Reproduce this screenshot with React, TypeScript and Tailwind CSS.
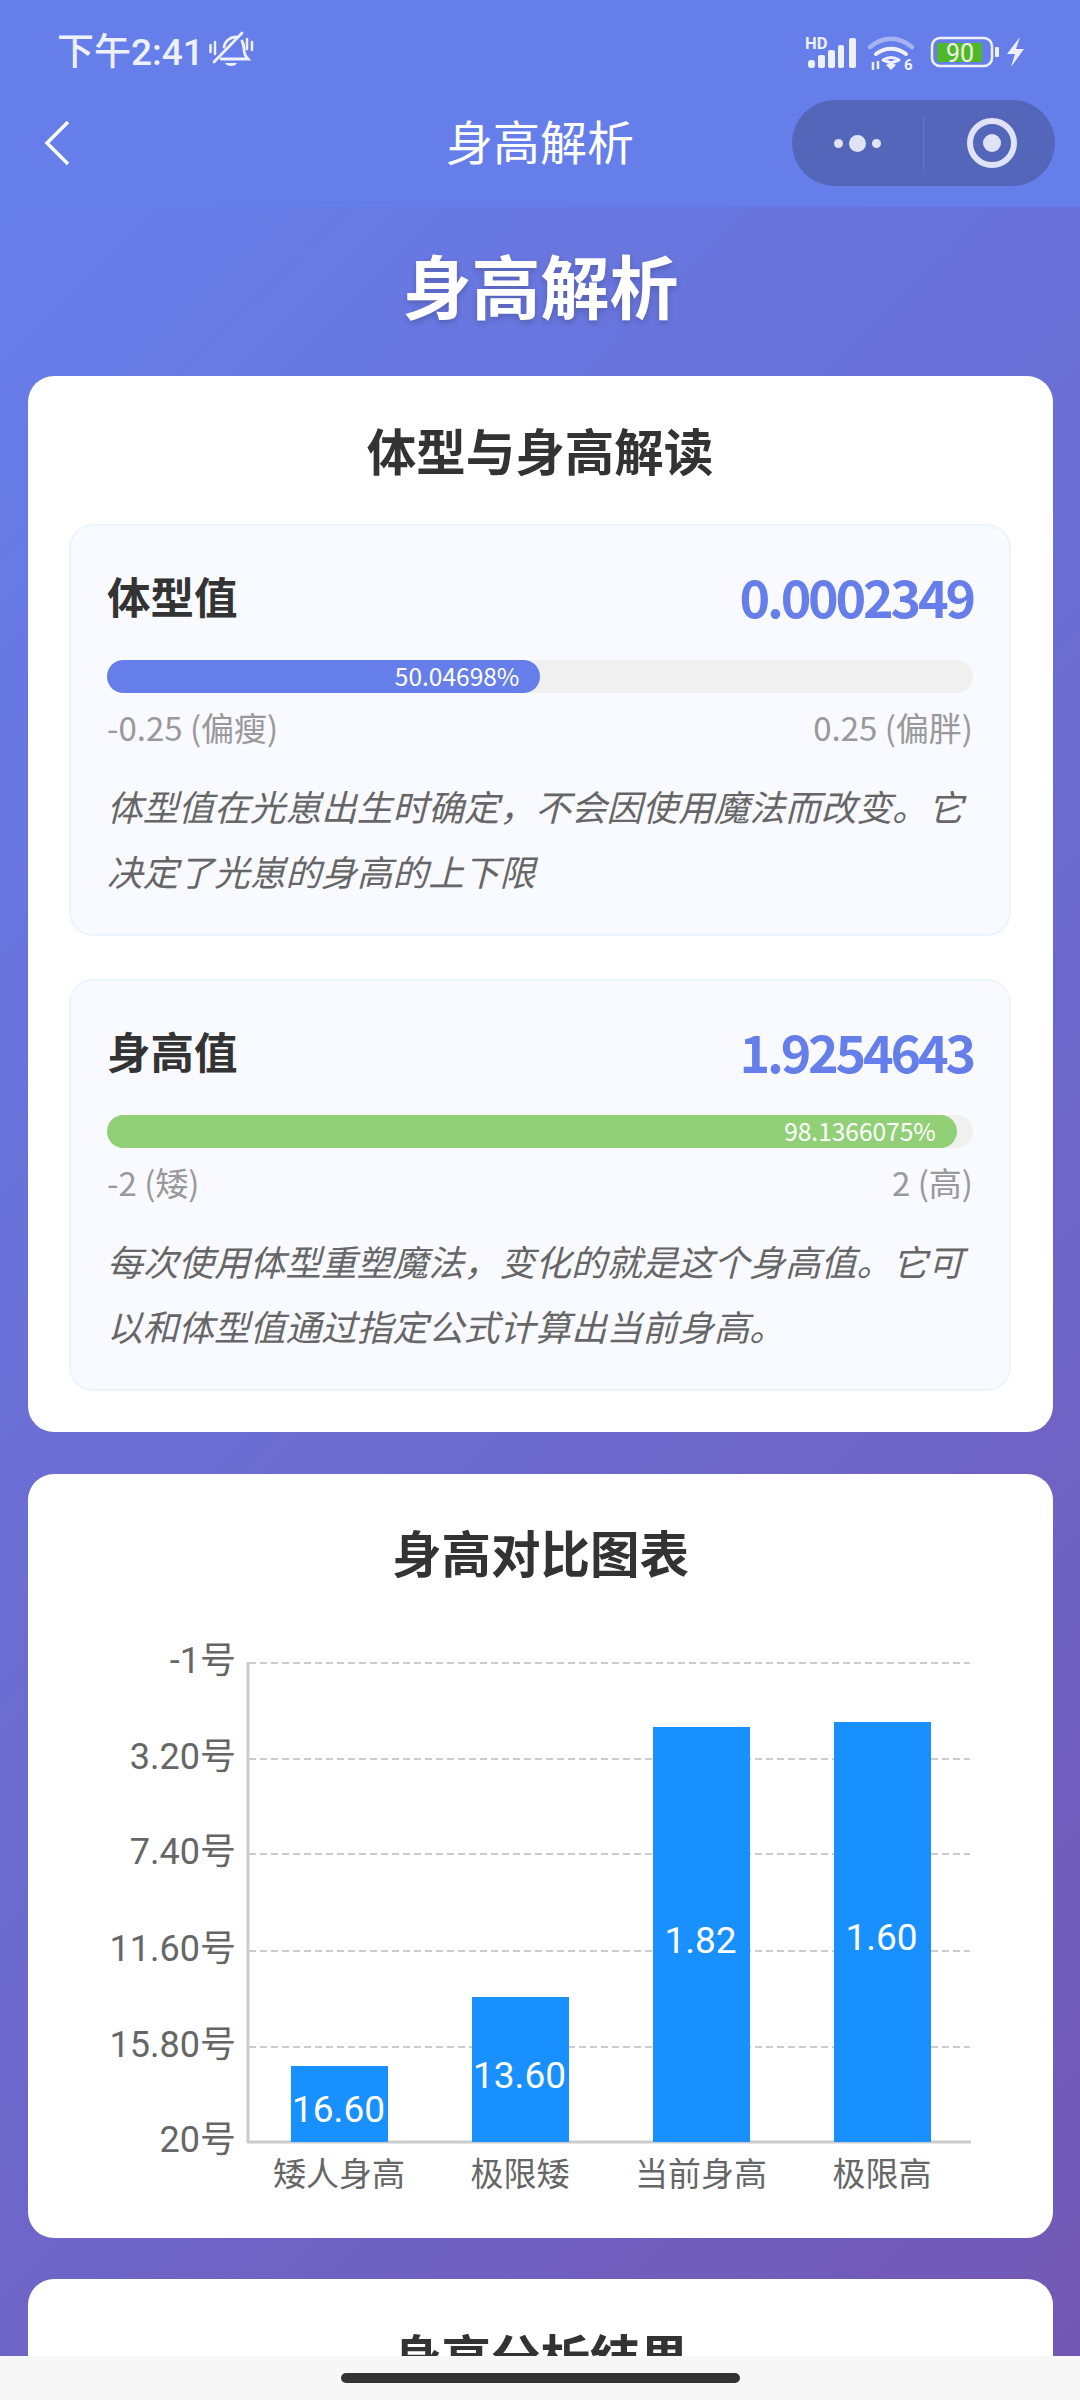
const ticks = [
  { y: 1663, label: "-1号" },
  { y: 1759, label: "3.20号" },
  { y: 1854, label: "7.40号" },
  { y: 1951, label: "11.60号" },
  { y: 2047, label: "15.80号" },
  { y: 2142, label: "20号" },
];

const bars = [
  { x: 291, top: 2066, name: "矮人身高", value: "16.60" },
  { x: 472, top: 1997, name: "极限矮", value: "13.60" },
  { x: 653, top: 1727, name: "当前身高", value: "1.82" },
  { x: 834, top: 1722, name: "极限高", value: "1.60" },
];

function StatusLeft() {
  return (
    <div className="flex items-center">
      <span className="font-['Roboto','Noto_Sans_CJK_SC',sans-serif] text-[37px] font-medium leading-[44px] text-[#eef0fb]">下午2:41</span>
      <svg width="46" height="40" viewBox="0 0 46 40" className="mb-[6px] ml-[5px]" fill="none" stroke="#eef0fb" strokeWidth="2.8" strokeLinecap="round">
        <path d="M1.5 15v7M6 12v12M38 9v10M43 12v8" strokeWidth="2.5" />
        <path d="M15 17c1-6 6-10 12-10" />
        <path d="M12 29h27c-3-3-4-6-4-10 0-3-1-6-2-8" />
        <path d="M5 32 33 3" />
        <path d="M16 33h12c-1 2-3 3-6 3s-5-1-6-3z" fill="#eef0fb" stroke="none" />
      </svg>
    </div>
  );
}

function StatusRight() {
  return (
    <svg width="222" height="36" viewBox="804 36 222 36" fill="none" className="mt-[6px]">
      <text x="806" y="49" fontSize="16.5" fontWeight="700" fill="#eef0fb" className="font-['Roboto',sans-serif]">HD</text>
      <rect x="809" y="60" width="7" height="8" rx="3" fill="#eef0fb" />
      <rect x="819" y="55" width="7" height="13" rx="2" fill="#eef0fb" />
      <rect x="829" y="50" width="7" height="18" rx="2" fill="#eef0fb" />
      <rect x="839" y="45" width="6" height="23" rx="2" fill="#eef0fb" />
      <rect x="850" y="38" width="7" height="30" rx="2" fill="#eef0fb" />
      <path d="M871 47c13-11 29-11 42 0" stroke="#a5b3f2" strokeWidth="4.5" strokeLinecap="round" />
      <path d="M877 54c9-7 21-7 30 0" stroke="#eef0fb" strokeWidth="4" strokeLinecap="round" />
      <path d="M884 60c5-3 11-3 16 0l-8 3z" stroke="#eef0fb" strokeWidth="3" strokeLinejoin="round" />
      <path d="M887 65l5 5 5-5c-3-2-7-2-10 0z" fill="#eef0fb" />
      <path d="M874 62v8M879 61v8" stroke="#eef0fb" strokeWidth="2.5" />
      <text x="905" y="70" fontSize="15" fontWeight="700" fill="#eef0fb" className="font-['Roboto',sans-serif]">6</text>
      <rect x="933" y="38" width="60" height="28" rx="8" stroke="#eef0fb" strokeWidth="2.5" />
      <rect x="938" y="43" width="45" height="19" fill="#4fb82a" />
      <text x="961" y="62" fontSize="25" textAnchor="middle" fill="#eef8e6" className="font-['Roboto',sans-serif]">90</text>
      <rect x="996" y="47" width="4" height="10" rx="1" fill="#eef0fb" />
      <path d="M1021 37l-13 17h8l-4 13 13-18h-8z" fill="#eef0fb" />
    </svg>
  );
}

function Capsule() {
  return (
    <div className="flex h-[86px] w-[263px] items-center rounded-full bg-[#5366b9]">
      <div className="flex w-[131px] items-center justify-end gap-[6px] pr-[42px]">
        <span className="h-[9px] w-[9px] rounded-full bg-[#dfe3f5]" />
        <span className="h-[17px] w-[17px] rounded-full bg-[#dfe3f5]" />
        <span className="h-[9px] w-[9px] rounded-full bg-[#dfe3f5]" />
      </div>
      <div className="h-[53px] w-px bg-[#6375c4]" />
      <div className="flex flex-1 justify-center pl-[5px]">
        <div className="flex h-[50px] w-[50px] items-center justify-center rounded-full border-[6px] border-[#dfe3f5]">
          <span className="h-[18px] w-[18px] rounded-full bg-[#dfe3f5]" />
        </div>
      </div>
    </div>
  );
}

function InfoBlock(props: {
  title: string;
  value: string;
  percent: string;
  fillClass: string;
  min: string;
  max: string;
  lines: string[];
}) {
  return (
    <div className="rounded-[24px] border-2 border-[#ebf5fd] bg-[#f8faff] px-[36px] pb-[31px] pt-[40px]">
      <div className="flex h-[60px] items-center justify-between">
        <span className="text-[43.5px] font-bold text-[#333]">{props.title}</span>
        <span className="text-[52px] font-semibold tracking-[-3.2px] text-[#667eea]">{props.value}</span>
      </div>
      <div className="mt-[34px] h-[33px] rounded-full bg-[#f0f0f0]">
        <div className={`${props.fillClass} flex h-full items-center justify-end rounded-full pr-[21px] text-[24.5px] leading-none text-white`}>
          {props.percent}
        </div>
      </div>
      <div className="mt-[12px] flex h-[46px] items-center justify-between text-[33px] text-[#999]">
        <span>{props.min}</span>
        <span>{props.max}</span>
      </div>
      <p className="mt-[22px] text-[35.7px] italic leading-[65px] text-[#666]">
        {props.lines[0]}
        <br />
        {props.lines[1]}
      </p>
    </div>
  );
}

function HeightChart() {
  return (
    <svg viewBox="28 1582 1024 656" className="block h-[656px] w-[1024px] font-['Roboto','Noto_Sans_CJK_SC',sans-serif]">
      {ticks.map((t) => (
        <g key={t.y}>
          {t.y !== 2142 && <line x1="249" x2="970" y1={t.y} y2={t.y} stroke="#cccccc" strokeWidth="2" strokeDasharray="7 4" />}
          <text x="236" y={t.y + 10} fontSize="36" textAnchor="end" fill="#666666">{t.label}</text>
        </g>
      ))}
      <line x1="248" x2="248" y1="1662" y2="2143" stroke="#cccccc" strokeWidth="3" />
      <line x1="247" x2="971" y1="2142" y2="2142" stroke="#cccccc" strokeWidth="3" />
      {bars.map((b) => (
        <g key={b.name}>
          <rect x={b.x} y={b.top} width="97" height={2142 - b.top} fill="#1890ff" />
          <text x={b.x + 47.5} y={(b.top + 2142) / 2 + 18} fontSize="37" textAnchor="middle" fill="#ffffff">{b.value}</text>
          <text x={b.x + 48} y="2186" fontSize="33" textAnchor="middle" fill="#666666">{b.name}</text>
        </g>
      ))}
    </svg>
  );
}

export default function App() {
  return (
    <div className="flex h-[2400px] w-[1080px] flex-col overflow-hidden font-['Noto_Sans_CJK_SC',sans-serif]">
      <header className="h-[207px] shrink-0 bg-[#667eea]">
        <div className="flex h-[100px] items-start justify-between pl-[57px] pr-[55px] pt-[30px]">
          <StatusLeft />
          <StatusRight />
        </div>
        <div className="relative flex h-[86px] items-center justify-between pl-[44px] pr-[25px]">
          <svg width="26" height="46" viewBox="0 0 26 46" fill="none" stroke="#fff" strokeWidth="3.5">
            <path d="M24 2 3 23l21 21" />
          </svg>
          <span className="absolute left-0 right-0 pb-[6px] text-center text-[47px] text-white">身高解析</span>
          <Capsule />
        </div>
      </header>

      <main className="min-h-0 flex-1 overflow-hidden">
        <div className="h-[3250px] bg-[linear-gradient(135deg,#667eea,#764ba2)] pl-[28px] pr-[27px]">
          <h1 className="h-[169px] pt-[40px] text-center text-[69px] font-bold leading-[74px] text-white [text-shadow:0_3px_6px_rgba(0,0,0,0.2)]">
            身高解析
          </h1>

          <section className="rounded-[26px] bg-white pb-[41px] pl-[41px] pr-[42px] pt-[44px]">
            <h2 className="mb-[44px] text-center text-[49.5px] font-bold leading-[60px] text-[#333]">体型与身高解读</h2>
            <div className="flex flex-col gap-[43px]">
              <InfoBlock
                title="体型值"
                value="0.0002349"
                percent="50.04698%"
                fillClass="w-[50.05%] bg-[#667eea]"
                min="-0.25 (偏瘦)"
                max="0.25 (偏胖)"
                lines={["体型值在光崽出生时确定，不会因使用魔法而改变。它", "决定了光崽的身高的上下限"]}
              />
              <InfoBlock
                title="身高值"
                value="1.9254643"
                percent="98.1366075%"
                fillClass="w-[98.14%] bg-[#91d076]"
                min="-2 (矮)"
                max="2 (高)"
                lines={["每次使用体型重塑魔法，变化的就是这个身高值。它可", "以和体型值通过指定公式计算出当前身高。"]}
              />
            </div>
          </section>

          <section className="mt-[42px] rounded-[26px] bg-white pt-[48px]">
            <h2 className="text-center text-[49.5px] font-bold leading-[60px] text-[#333]">身高对比图表</h2>
            <HeightChart />
          </section>

          <section className="mt-[41px] h-[300px] rounded-[26px] bg-white pt-[47px]">
            <h2 className="text-center text-[49.5px] font-bold leading-[60px] text-[#333]">身高分析结果</h2>
          </section>
        </div>
      </main>

      <footer className="flex h-[44px] shrink-0 items-start justify-center bg-[#f7f7f7] pt-[17px]">
        <div className="h-[10px] w-[399px] rounded-full bg-[#333]" />
      </footer>
    </div>
  );
}
